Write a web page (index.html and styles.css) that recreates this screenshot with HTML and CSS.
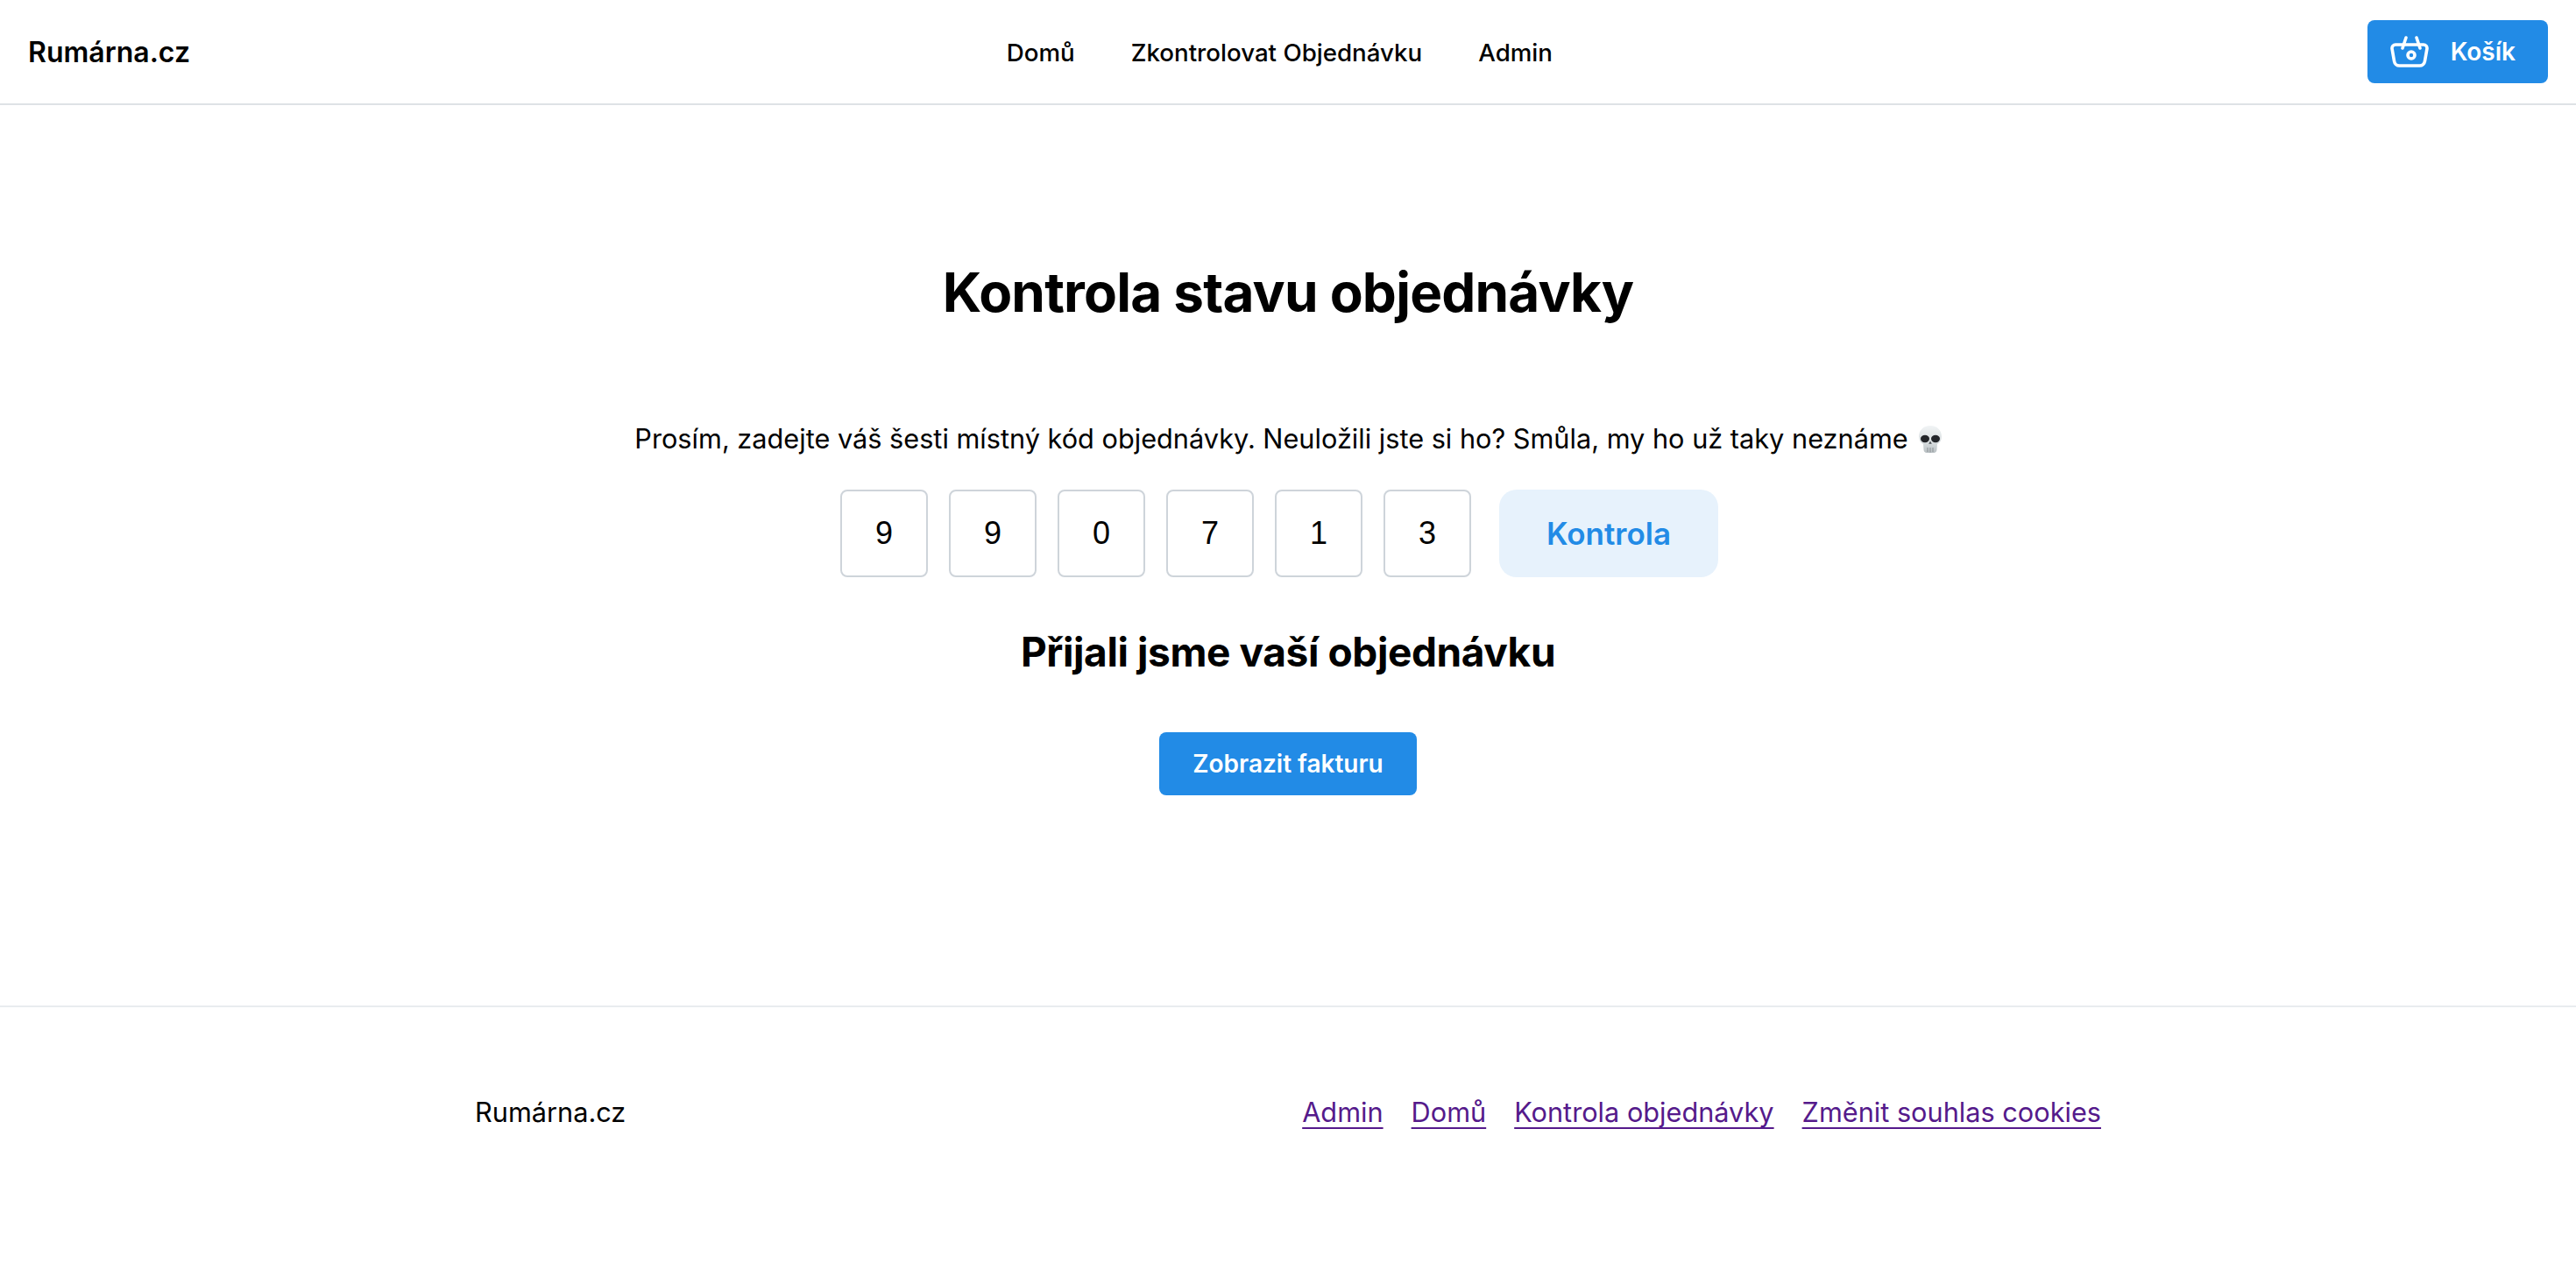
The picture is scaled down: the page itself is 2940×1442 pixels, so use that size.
FILE: index.html
```html
<!DOCTYPE html>
<html lang="cs">
<head>
<meta charset="utf-8">
<title>Rumárna.cz</title>
<link rel="stylesheet" href="styles.css">
</head>
<body>
<header class="topbar">
  <div class="brand">Rumárna.cz</div>
  <nav class="topnav">
    <a href="#">Domů</a>
    <a href="#">Zkontrolovat Objednávku</a>
    <a href="#">Admin</a>
  </nav>
  <button class="btn btn-cart" type="button">
    <svg class="cart-icon" viewBox="0 0 24 24" fill="none" stroke="currentColor" stroke-width="1.8" stroke-linecap="round" stroke-linejoin="round"><path d="M10 14a2 2 0 1 0 4 0a2 2 0 0 0 -4 0"/><path d="M5.001 8h13.999a2 2 0 0 1 1.977 2.304l-1.255 7.152a3 3 0 0 1 -2.966 2.544h-11.512a3 3 0 0 1 -2.965 -2.544l-1.255 -7.152a2 2 0 0 1 1.977 -2.304z"/><path d="M17 10l-2 -6"/><path d="M7 10l2 -6"/></svg>
    <span>Košík</span>
  </button>
</header>
<main class="content">
  <h1>Kontrola stavu objednávky</h1>
  <p class="lead"><span>Prosím, zadejte váš šesti místný kód objednávky. Neuložili jste si ho? Smůla, my ho už taky neznáme</span><svg class="skull" viewBox="0 0 26 31"><defs><linearGradient id="sk" x1="0" y1="0" x2="0" y2="1"><stop offset="0" stop-color="#f1f4f5"/><stop offset="0.6" stop-color="#d9dee0"/><stop offset="1" stop-color="#b9c0c3"/></linearGradient></defs><path fill="url(#sk)" d="M13 0C5 0 0 5.500 0 12.500c0 4 1.800 7 5 8.500l.5 6.500c.2 2 1.500 3.500 3.500 3.500h8c2 0 3.300-1.500 3.500-3.500L21 21c3.200-1.500 5-4.500 5-8.500C26 5.500 21 0 13 0z"/><ellipse cx="7" cy="15" rx="5" ry="4.200" fill="#24262a"/><ellipse cx="19" cy="15" rx="5" ry="4.200" fill="#24262a"/><path d="M13 17.500l-1.800 3.300h3.600z" fill="#4d5256"/><path d="M10 25v5M13 25v5.500M16 25v5" stroke="#8b9195" stroke-width="1"/></svg></p>
  <div class="code-row">
    <div class="digit">9</div>
    <div class="digit">9</div>
    <div class="digit">0</div>
    <div class="digit">7</div>
    <div class="digit">1</div>
    <div class="digit">3</div>
    <button class="btn-check" type="button">Kontrola</button>
  </div>
  <h2>Přijali jsme vaší objednávku</h2>
  <button class="btn btn-invoice" type="button">Zobrazit fakturu</button>
</main>
<footer class="footer">
  <div class="footer-inner">
    <div class="footer-brand">Rumárna.cz</div>
    <nav class="footer-links">
      <a href="#">Admin</a>
      <a href="#">Domů</a>
      <a href="#">Kontrola objednávky</a>
      <a href="#">Změnit souhlas cookies</a>
    </nav>
  </div>
</footer>
</body>
</html>
```
FILE: styles.css
```css
* { box-sizing: border-box; }
html, body { margin: 0; padding: 0; }
body {
  font-family: Inter, "Liberation Sans", sans-serif;
  color: #000;
  background: #fff;
  min-height: 1442px;
}
.topbar {
  height: 120px;
  border-bottom: 2px solid #dee2e6;
  padding: 0 32px;
  display: flex;
  justify-content: space-between;
  align-items: center;
}
.brand { font-size: 32px; font-weight: 600; padding-top: 1px; }
.topnav { display: flex; gap: 64px; padding-top: 2px; margin-left: 2px; }
.topnav a { color: #000; text-decoration: none; font-size: 27.7px; font-weight: 500; }
.btn {
  border: 0;
  background: #228be6;
  color: #fff;
  font-family: inherit;
  font-weight: 600;
  font-size: 28px;
  border-radius: 8px;
  height: 72px;
  padding: 0 38px;
  display: flex;
  align-items: center;
}
.btn-cart { gap: 21px; padding: 0 37px 0 26px; }
.cart-icon { width: 48px; height: 48px; }
.content {
  height: 1030px;
  display: flex;
  flex-direction: column;
  align-items: center;
  padding-top: 177px;
  border-bottom: 2px solid #e9ecef;
}
h1 { font-size: 62px; letter-spacing: -0.8px; font-weight: 700; line-height: 1.2; margin: 0 0 106px; }
.lead { font-size: 30.7px; line-height: 48px; margin: 0 0 34px; display: flex; align-items: center; gap: 12px; }
.skull { width: 26px; height: 31px; }
.code-row { display: flex; gap: 24px; align-items: center; margin-right: 20px; }
.digit {
  width: 100px;
  height: 100px;
  border: 2px solid #ced4da;
  border-radius: 8px;
  font-size: 36px;
  display: flex;
  align-items: center;
  justify-content: center;
  font-family: "Liberation Sans", sans-serif;
}
.btn-check {
  margin-left: 8px;
  width: 250px;
  height: 100px;
  border: 0;
  border-radius: 20px;
  background: #e7f2fc;
  color: #228be6;
  font-family: inherit;
  font-size: 35px;
  font-weight: 600;
}
h2 { font-size: 46px; letter-spacing: -0.4px; font-weight: 700; line-height: 1.2; margin: 58px 0 63px; }
.footer-inner {
  width: 1856px;
  margin: 0 auto;
  padding-top: 101px;
  display: flex;
  justify-content: space-between;
  align-items: center;
}
.footer-brand { font-size: 30.7px; }
.footer-links { display: flex; gap: 32px; }
.footer-links a {
  color: #551a8b;
  font-size: 30.7px;
  text-decoration-thickness: 2px;
  text-underline-offset: 6px;
}
```
